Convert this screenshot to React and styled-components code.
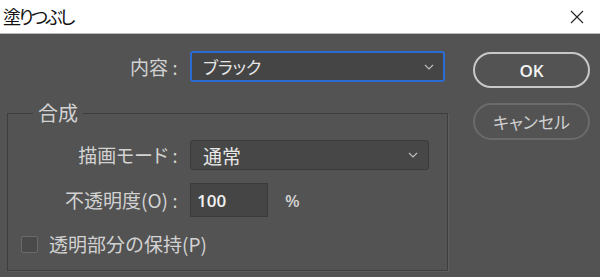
import React from "react";
import styled, { createGlobalStyle } from "styled-components";

const GlobalStyle = createGlobalStyle`
  html, body {
    margin: 0;
    padding: 0;
    background: #535353;
  }
  body {
    font-family: "Noto Sans CJK JP", "Noto Sans", sans-serif;
  }
`;

const Window = styled.div`
  width: 600px;
  height: 277px;
  display: flex;
  flex-direction: column;
  overflow: hidden;
`;

const TitleBar = styled.div`
  height: 33px;
  background: #ffffff;
  border-bottom: 1px solid #b9b9b9;
  display: flex;
  align-items: center;
  justify-content: space-between;
  padding: 0 0 0 3px;
`;

const Title = styled.div`
  font-size: 18px;
  letter-spacing: -2.5px;
  color: #111;
  font-feature-settings: "palt";
  margin-top: -2px;
`;

const Close = styled.div`
  width: 46px;
  height: 33px;
  display: flex;
  align-items: center;
  justify-content: center;
`;

const Body = styled.div`
  flex: 1;
  background: #535353;
  display: flex;
  padding-left: 7px;
`;

const Main = styled.div`
  width: 440px;
  display: flex;
  flex-direction: column;
`;

const Row = styled.div`
  display: grid;
  grid-template-columns: ${(p) => p.$label}px auto;
  column-gap: 10px;
  align-items: center;
  margin-top: ${(p) => p.$top || 0}px;
`;

const Label = styled.div`
  display: flex;
  justify-content: flex-end;
  align-items: center;
  font-size: 19px;
  line-height: 24px;
  color: #d2d2d2;
  white-space: nowrap;
  font-feature-settings: "palt";
`;

const Colon = styled.span`
  width: 10px;
  text-align: center;
  font-size: 18px;
  color: #d2d2d2;
  margin-left: 2px;
`;

const Select = styled.div`
  box-sizing: border-box;
  width: ${(p) => p.$w}px;
  height: ${(p) => p.$h}px;
  border-radius: 3px;
  border: ${(p) => (p.$focus ? "2px solid #2b6cd3" : "1px solid #3a3a3a")};
  background: ${(p) => (p.$focus ? "#454545" : "#474747")};
  display: flex;
  align-items: center;
  justify-content: space-between;
  padding: 0 ${(p) => (p.$focus ? 9 : 10)}px 0 ${(p) => (p.$focus ? 11 : 12)}px;
  font-size: ${(p) => p.$size || 17}px;
  color: #e6e6e6;
  font-feature-settings: "palt";
`;

const Group = styled.fieldset`
  box-sizing: border-box;
  width: 441px;
  height: 168px;
  margin: 21px 0 0 0;
  padding: 0;
  border: 1px solid #3e3e3e;
  box-shadow: 1px 1px 0 #5e5e5e;
  min-width: 0;
`;

const Legend = styled.legend`
  margin-left: 25px;
  padding: 0 5px;
  font-size: 20px;
  line-height: 20px;
  color: #d2d2d2;
`;

const Input = styled.div`
  box-sizing: border-box;
  width: 78px;
  height: 34px;
  border: 1px solid #3a3a3a;
  background: #454545;
  display: flex;
  align-items: center;
  padding-left: 6px;
  font-family: "Open Sans", "Liberation Sans", sans-serif;
  font-size: 17px;
  font-weight: 600;
  color: #f2f2f2;
`;

const InputWrap = styled.div`
  display: flex;
  align-items: center;
  gap: 17px;
`;

const Unit = styled.span`
  font-family: "Open Sans", "Liberation Sans", sans-serif;
  font-size: 17px;
  font-weight: 600;
  color: #d2d2d2;
`;

const CheckRow = styled.label`
  display: flex;
  align-items: center;
  gap: 11px;
  margin: 15px 0 0 13px;
  font-size: 19px;
  line-height: 24px;
  color: #d2d2d2;
`;

const Box = styled.span`
  box-sizing: border-box;
  width: 17px;
  height: 17px;
  border: 1px solid #6a6a6a;
  border-radius: 2px;
  background: #4a4a4a;
`;

const Buttons = styled.div`
  margin-left: 26px;
  padding-top: 18px;
  display: flex;
  flex-direction: column;
  gap: 15px;
`;

const Button = styled.div`
  box-sizing: border-box;
  width: 117px;
  height: ${(p) => (p.$primary ? 36 : 37)}px;
  border-radius: 19px;
  border: 2px solid ${(p) => (p.$primary ? "#c8c8c8" : "#6b6b6b")};
  display: flex;
  align-items: center;
  justify-content: center;
  font-size: 17px;
  color: ${(p) => (p.$primary ? "#f4f4f4" : "#d0d0d0")};
  font-family: ${(p) =>
    p.$primary
      ? `"Open Sans", "Liberation Sans", sans-serif`
      : `"Noto Sans CJK JP", sans-serif`};
  font-weight: ${(p) => (p.$primary ? 600 : 400)};
  font-feature-settings: "palt";
`;

const Chevron = () => (
  <svg width="10" height="6" viewBox="0 0 10 6">
    <path d="M1 1 L5 5 L9 1" fill="none" stroke="#bdbdbd" strokeWidth="1.2" />
  </svg>
);

export default function App() {
  return (
    <>
      <GlobalStyle />
      <Window>
        <TitleBar>
          <Title>塗りつぶし</Title>
          <Close>
            <svg width="14" height="14" viewBox="0 0 14 14">
              <path d="M1 1 L13 13 M13 1 L1 13" stroke="#222" strokeWidth="1.1" />
            </svg>
          </Close>
        </TitleBar>
        <Body>
          <Main>
            <Row $label={173} $top={17}>
              <Label>
                内容<Colon>:</Colon>
              </Label>
              <Select $w={255} $h={31} $focus>
                ブラック
                <Chevron />
              </Select>
            </Row>
            <Group>
              <Legend>合成</Legend>
              <Row $label={172} $top={17}>
                <Label>
                  描画モード<Colon>:</Colon>
                </Label>
                <Select $w={239} $h={30} $size={19}>
                  通常
                  <Chevron />
                </Select>
              </Row>
              <Row $label={172} $top={13}>
                <Label>
                  不透明度(O)<Colon>:</Colon>
                </Label>
                <InputWrap>
                  <Input>100</Input>
                  <Unit>%</Unit>
                </InputWrap>
              </Row>
              <CheckRow>
                <Box />
                透明部分の保持(P)
              </CheckRow>
            </Group>
          </Main>
          <Buttons>
            <Button $primary>OK</Button>
            <Button>キャンセル</Button>
          </Buttons>
        </Body>
      </Window>
    </>
  );
}
